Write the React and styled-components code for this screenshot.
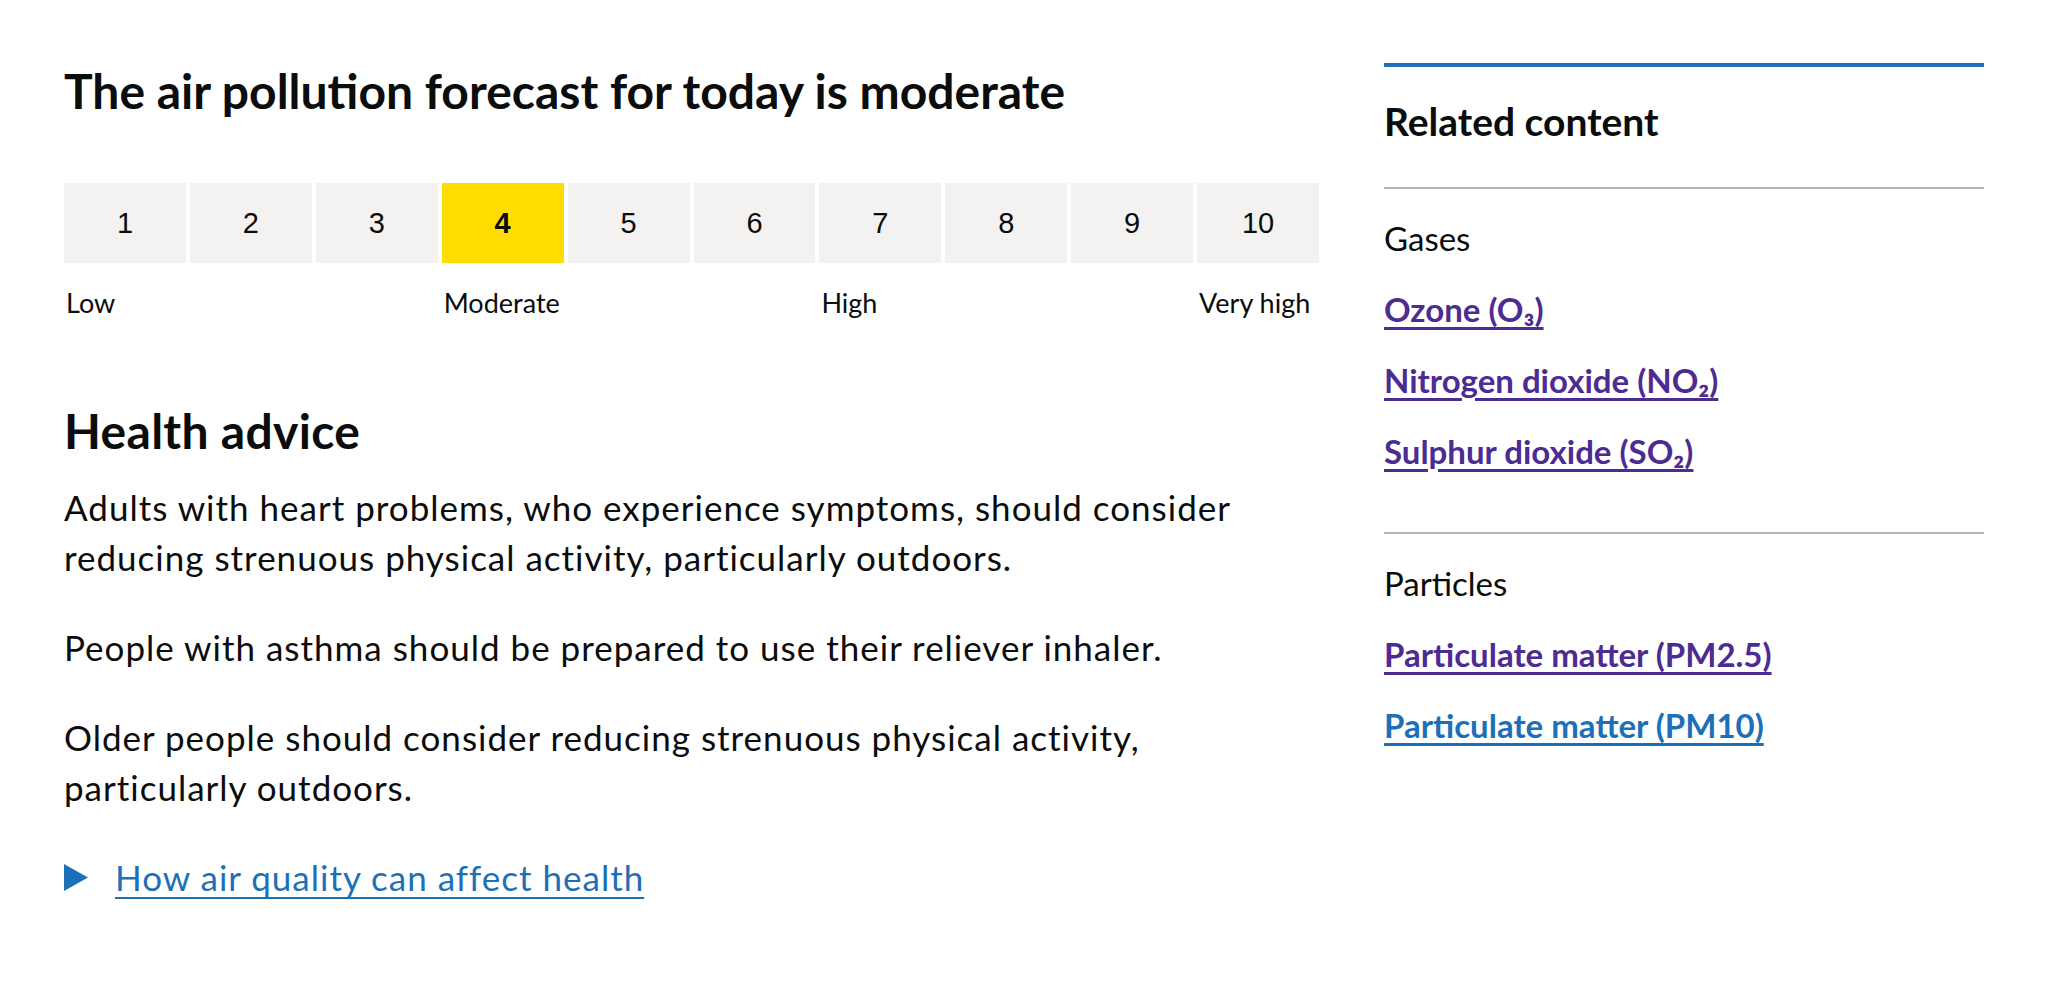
import React from "react";
import styled, { createGlobalStyle } from "styled-components";

const GlobalStyle = createGlobalStyle`
  body {
    margin: 0;
    background: #ffffff;
    color: #0b0c0c;
    font-family: "Lato", "Liberation Sans", sans-serif;
  }
`;

const Page = styled.div`
  display: grid;
  grid-template-columns: 1fr 600px;
  column-gap: 65px;
  align-items: start;
  padding: 63px 64px 60px;
`;

const Main = styled.main`
  min-width: 0;
`;

const Title = styled.h1`
  margin: 0 0 64px;
  font-size: 48px;
  font-weight: 700;
  line-height: 56px;
`;

const Scale = styled.div`
  display: grid;
  grid-template-columns: repeat(10, 1fr);
  gap: 4px;
`;

const Band = styled.div`
  height: 80px;
  display: flex;
  align-items: center;
  justify-content: center;
  background: ${(p) => (p.$active ? "#ffdd00" : "#f3f2f1")};
  font-family: "Liberation Sans", Arial, sans-serif;
  font-size: 29px;
  font-weight: ${(p) => (p.$active ? 700 : 400)};
`;

const Labels = styled.div`
  display: grid;
  grid-template-columns: repeat(10, 1fr);
  gap: 4px;
  margin-top: 23px;
`;

const Label = styled.span`
  grid-column: ${(p) => p.$col};
  padding-left: 2px;
  font-size: 27px;
  line-height: 34px;
  white-space: nowrap;
`;

const SubTitle = styled.h2`
  margin: 84px 0 25px;
  font-size: 48px;
  font-weight: 700;
  line-height: 53px;
  letter-spacing: 0.3px;
`;

const Para = styled.p`
  margin: 0 0 40px;
  font-size: 35px;
  line-height: 50px;
  letter-spacing: 1px;
  max-width: 1200px;
`;

const Summary = styled.div`
  display: flex;
  align-items: center;
  gap: 27px;
  height: 50px;
`;

const SummaryText = styled.a`
  color: #1d70b8;
  font-size: 35px;
  line-height: 50px;
  letter-spacing: 1px;
  text-decoration: underline;
  text-decoration-thickness: 2px;
  text-underline-offset: 6px;
  cursor: pointer;
`;

const Aside = styled.aside`
  border-top: 4px solid #1d70b8;
  padding-top: 32px;
`;

const AsideTitle = styled.h2`
  margin: 0 0 43px;
  font-size: 39px;
  font-weight: 700;
  line-height: 45px;
`;

const Section = styled.section`
  border-top: 2px solid #b1b4b6;
  padding: 29px 0 61px;
`;

const SectionTitle = styled.p`
  margin: 0;
  font-size: 33px;
  line-height: 40px;
`;

const LinkList = styled.ul`
  list-style: none;
  margin: 0;
  padding: 0;
`;

const Item = styled.li`
  margin-top: 31px;
  height: 40px;
  font-size: 33px;
  line-height: 40px;
`;

const RelLink = styled.a`
  color: ${(p) => (p.$visited ? "#4c2c92" : "#1d70b8")};
  font-weight: 700;
  text-decoration: underline;
  text-decoration-thickness: 3px;
  text-underline-offset: 5px;
`;

const bands = [1, 2, 3, 4, 5, 6, 7, 8, 9, 10];

const sections = [
  {
    title: "Gases",
    links: [
      { text: "Ozone (O₃)", visited: true },
      { text: "Nitrogen dioxide (NO₂)", visited: true },
      { text: "Sulphur dioxide (SO₂)", visited: true },
    ],
  },
  {
    title: "Particles",
    links: [
      { text: "Particulate matter (PM2.5)", visited: true },
      { text: "Particulate matter (PM10)", visited: false },
    ],
  },
];

const App = () => {
  return (
    <>
      <GlobalStyle />
      <Page>
        <Main>
          <Title>The air pollution forecast for today is moderate</Title>
          <Scale>
            {bands.map((n) => (
              <Band key={n} $active={n === 4}>
                {n}
              </Band>
            ))}
          </Scale>
          <Labels>
            <Label $col={1}>Low</Label>
            <Label $col={4}>Moderate</Label>
            <Label $col={7}>High</Label>
            <Label $col={10}>Very high</Label>
          </Labels>

          <SubTitle>Health advice</SubTitle>
          <Para>
            Adults with heart problems, who experience symptoms, should consider
            reducing strenuous physical activity, particularly outdoors.
          </Para>
          <Para>
            People with asthma should be prepared to use their reliever inhaler.
          </Para>
          <Para>
            Older people should consider reducing strenuous physical activity,
            particularly outdoors.
          </Para>
          <Summary>
            <svg width="24" height="27" viewBox="0 0 24 27">
              <polygon points="0,0 24,13.5 0,27" fill="#1d70b8" />
            </svg>
            <SummaryText>How air quality can affect health</SummaryText>
          </Summary>
        </Main>

        <Aside>
          <AsideTitle>Related content</AsideTitle>
          {sections.map((s) => (
            <Section key={s.title}>
              <SectionTitle>{s.title}</SectionTitle>
              <LinkList>
                {s.links.map((l) => (
                  <Item key={l.text}>
                    <RelLink href="#" $visited={l.visited}>
                      {l.text}
                    </RelLink>
                  </Item>
                ))}
              </LinkList>
            </Section>
          ))}
        </Aside>
      </Page>
    </>
  );
};

export default App;
